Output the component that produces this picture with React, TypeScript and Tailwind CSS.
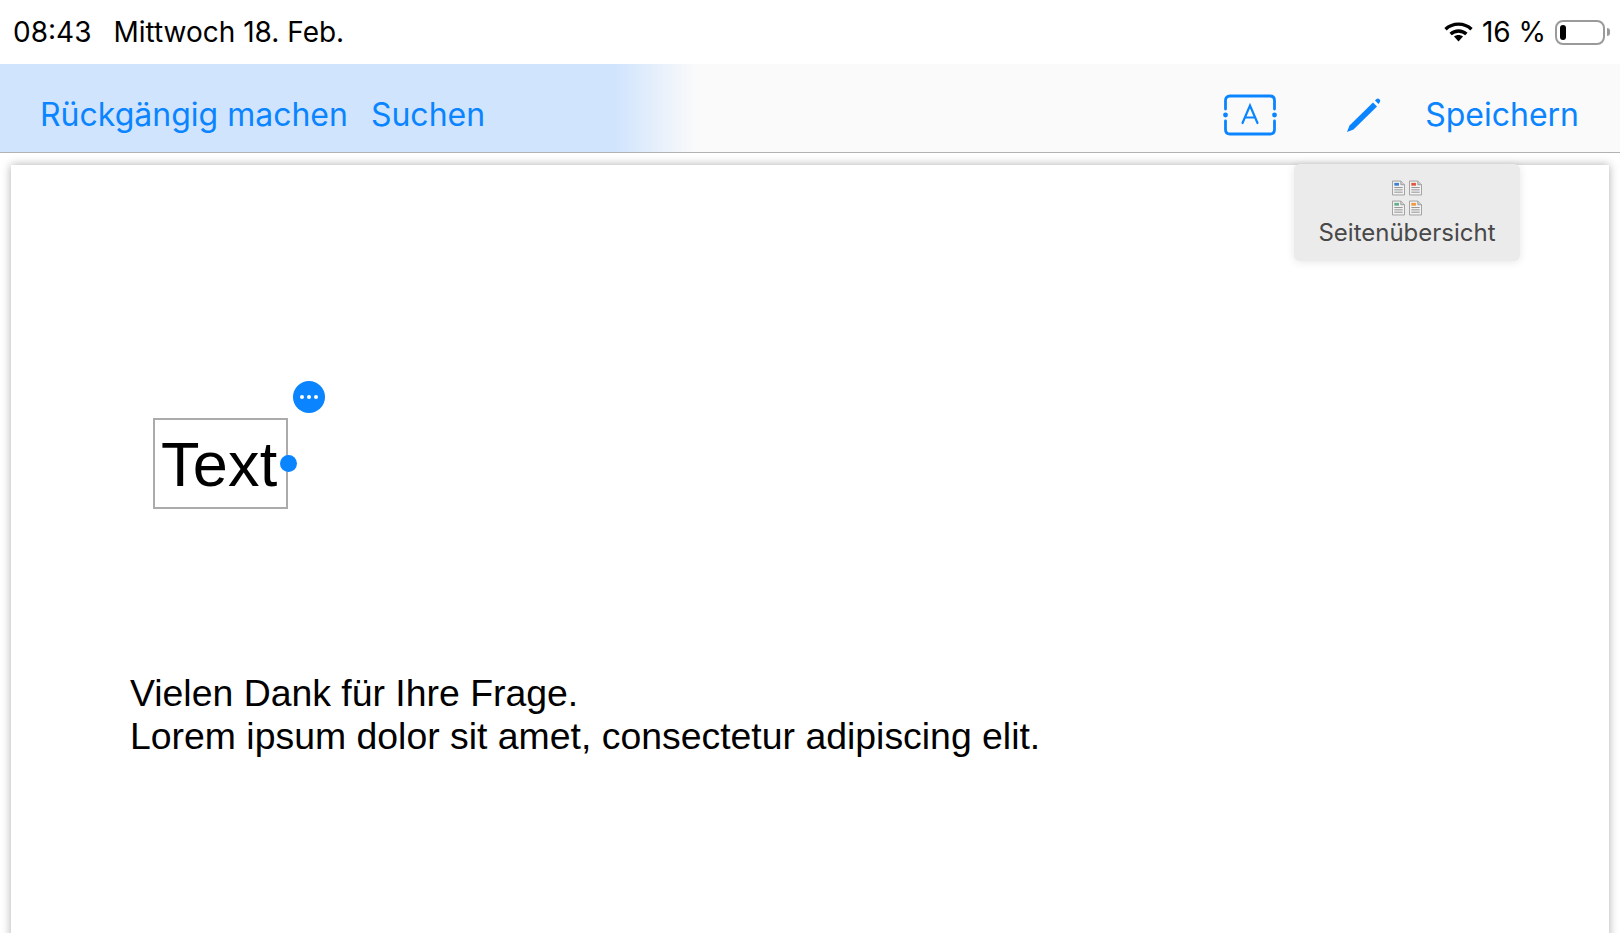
const BLUE = '#0a84ff';

function WifiIcon() {
  return (
    <svg width="29" height="22" viewBox="0 0 29 22" fill="none">
      <path d="M1.5 8.2C8.8 1.4 20.2 1.4 27.5 8.2" stroke="#000" strokeWidth="3.4" />
      <path d="M6.6 13C11.1 8.9 17.9 8.9 22.4 13" stroke="#000" strokeWidth="3.4" />
      <path d="M10 15.6C12.5 13.6 16.5 13.6 19 15.6L14.5 20.4Z" fill="#000" />
    </svg>
  );
}

function BatteryIcon() {
  return (
    <div className="flex items-center">
      <div className="flex items-center w-[50px] h-[25px] rounded-[8px] border-2 border-[#9a9a9a] pl-[3px]">
        <div className="w-[6px] h-[15px] rounded-[3px] bg-black" />
      </div>
      <div className="ml-[2px] w-[3px] h-[8px] rounded-r-[3px] bg-[#9a9a9a]" />
    </div>
  );
}

function TextFrameIcon() {
  return (
    <svg width="54" height="42" viewBox="0 0 54 42" fill="none" stroke={BLUE} strokeWidth="2.8" strokeLinecap="round">
      <path d="M2.5 15V6.5Q2.5 2 7 2H47Q51.5 2 51.5 6.5V15" />
      <path d="M2.5 27V35.5Q2.5 40 7 40H47Q51.5 40 51.5 35.5V27" />
      <circle cx="2.5" cy="21" r="2.4" fill={BLUE} stroke="none" />
      <circle cx="51.5" cy="21" r="2.4" fill={BLUE} stroke="none" />
      <path d="M19.5 29L27 11.5L34.5 29M22 23.5H32" strokeWidth="2.2" />
    </svg>
  );
}

function PencilIcon() {
  return (
    <svg width="36" height="36" viewBox="0 0 36 36" fill={BLUE}>
      <path d="M1 35L3.5 28.5L27 5.5L31 9.5L7.5 32.5Z" />
      <path d="M29 3.5L30.5 2Q32 1 33.5 2.2Q35 3.8 33.8 5.3L32.5 7Z" />
    </svg>
  );
}

function MiniDoc({ tint }: { tint: string }) {
  return (
    <svg width="13" height="16" viewBox="0 0 14 16">
      <path d="M.5.5H9.5L13.5 4.5V15.5H.5Z" fill="#f2f2f2" stroke="#9b9b9b" />
      <path d="M9.5.5V4.5H13.5" fill="#d0d0d0" stroke="#9b9b9b" />
      <rect x="2.5" y="2.5" width="5" height="3" fill={tint} />
      <path d="M2.5 7.5H11.5M2.5 10H11.5M2.5 12.5H11.5" stroke="#8d8d8d" />
    </svg>
  );
}

function PagesPopup() {
  return (
    <div className="absolute left-[1283px] top-[-1px] w-[226px] h-[97px] rounded-[6px] bg-[#ebebeb] shadow-[0_1px_8px_rgba(0,0,0,0.1)] flex flex-col items-center pt-[16px]">
      <div className="grid grid-cols-2 gap-x-[4px] gap-y-[4px]">
        <MiniDoc tint="#3f7fd0" />
        <MiniDoc tint="#e0563f" />
        <MiniDoc tint="#62b08c" />
        <MiniDoc tint="#f09a3e" />
      </div>
      <span className="mt-[3px] text-[24px] leading-[28px] text-[#484848]">Seitenübersicht</span>
    </div>
  );
}

function TextBox() {
  return (
    <div className="relative w-[135px] h-[91px] border-2 border-[#ababab] pl-[6px] pt-[2px] flex items-center font-['Liberation_Sans',sans-serif] text-[63px] tracking-[0.2px] text-black">
      Text
      <div className="absolute left-[125px] top-[35px] w-[17px] h-[17px] rounded-full bg-[#0a84ff]" />
      <div className="absolute left-[138px] top-[-39px] w-[32px] h-[32px] rounded-full bg-[#0a84ff] flex items-center justify-center gap-[3px]">
        <span className="w-[4px] h-[4px] rounded-full bg-white" />
        <span className="w-[4px] h-[4px] rounded-full bg-white" />
        <span className="w-[4px] h-[4px] rounded-full bg-white" />
      </div>
    </div>
  );
}

export default function App() {
  return (
    <div className="w-[1620px] h-[933px] overflow-hidden flex flex-col bg-white font-['Inter',sans-serif]">
      {/* Statusleiste */}
      <div className="h-[64px] shrink-0 flex items-center justify-between pl-[13px] pr-[10px] text-[28px] text-black">
        <div className="flex gap-[22px]">
          <span>08:43</span>
          <span>Mittwoch 18. Feb.</span>
        </div>
        <div className="flex items-center gap-[9px]">
          <WifiIcon />
          <span>16 %</span>
          <BatteryIcon />
        </div>
      </div>

      {/* Toolbar */}
      <div className="h-[89px] shrink-0 flex items-center justify-between pl-[40px] pr-[41px] pt-[13px] border-b border-[#b2b2b2] bg-[linear-gradient(90deg,#d0e4fd_0,#d0e4fd_615px,#fafafa_695px)] text-[32px] text-[#0a84ff]">
        <div className="flex gap-[23px]">
          <span>Rückgängig machen</span>
          <span>Suchen</span>
        </div>
        <div className="flex items-center">
          <TextFrameIcon />
          <div className="ml-[69px] mr-[43px]">
            <PencilIcon />
          </div>
          <span>Speichern</span>
        </div>
      </div>

      {/* Dokument */}
      <div className="flex-1 bg-white pt-[12px] px-[11px]">
        <div className="relative h-[900px] bg-white shadow-[0_0_9px_rgba(0,0,0,0.32)] pl-[142px] pt-[253px]">
          <PagesPopup />
          <TextBox />
          <div className="mt-[163px] -ml-[23px] font-['Liberation_Sans',sans-serif] text-[37.4px] leading-[43px] text-black">
            <div>Vielen Dank für Ihre Frage.</div>
            <div>Lorem ipsum dolor sit amet, consectetur adipiscing elit.</div>
          </div>
        </div>
      </div>
    </div>
  );
}
